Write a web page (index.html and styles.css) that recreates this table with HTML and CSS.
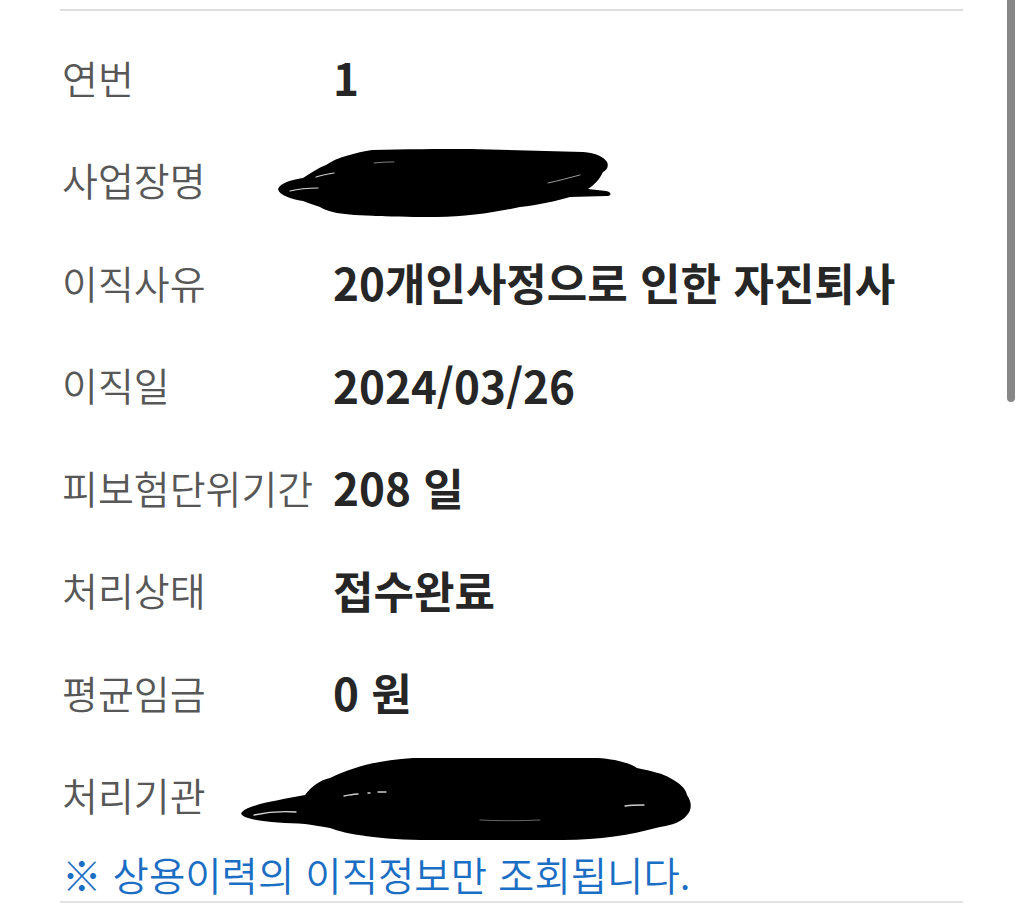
FILE: index.html
```html
<!DOCTYPE html>
<html lang="ko">
<head>
<meta charset="utf-8">
<title>이직정보</title>
<link rel="stylesheet" href="styles.css">
</head>
<body>
<div class="page">
  <div class="list">
    <div class="row"><div class="label">연번</div><div class="value">1</div></div>
    <div class="row"><div class="label">사업장명</div><div class="value">
      <svg class="redact redact-a" width="340" height="74" viewBox="0 0 340 74" aria-hidden="true">
        <path fill="#000" d="M 2,42 C 4,36 15,33 27,31 C 35,26 42,21 50,18 C 56,14 62,11 70,9 C 80,6 88,4 96,3 C 130,2 160,2 194,2 L 307,5 C 320,6 328,10 331,15 C 333,19 331,23 327,25 C 324,32 318,38 312,42 L 330,44 C 336,45 336,49 330,49 L 294,50 C 280,54 262,58 244,60 C 220,65 190,70 161,70 C 120,70 80,69 61,66 C 52,64 47,62 44,60 C 38,58 32,56 27,54 C 15,52 3,48 2,42 Z"/>
        <path fill="none" stroke="#fff" stroke-width="1.2" stroke-linecap="round" opacity="0.85" d="M 14,44 C 22,42 32,41 42,41"/>
        <path fill="none" stroke="#fff" stroke-width="1.2" stroke-linecap="round" opacity="0.8" d="M 40,30 C 46,28 52,27 58,26"/>
        <path fill="none" stroke="#fff" stroke-width="1" stroke-linecap="round" opacity="0.6" d="M 272,36 C 282,34 292,31 304,28"/>
        <path fill="none" stroke="#fff" stroke-width="1" stroke-linecap="round" opacity="0.5" d="M 98,16 C 106,15 112,15 118,15"/>
      </svg>
    </div></div>
    <div class="row"><div class="label">이직사유</div><div class="value">20개인사정으로 인한 자진퇴사</div></div>
    <div class="row"><div class="label">이직일</div><div class="value">2024/03/26</div></div>
    <div class="row"><div class="label">피보험단위기간</div><div class="value">208 일</div></div>
    <div class="row"><div class="label">처리상태</div><div class="value">접수완료</div></div>
    <div class="row"><div class="label">평균임금</div><div class="value">0 원</div></div>
    <div class="row"><div class="label">처리기관</div><div class="value">
      <svg class="redact redact-b" width="455" height="92" viewBox="0 0 455 92" aria-hidden="true">
        <path fill="#000" d="M 2,60 C 10,52 40,48 65,43 C 72,34 80,28 90,26 C 115,14 140,8 173,6 L 357,6 C 375,7 390,11 397,16 C 412,19 424,22 430,26 C 440,31 446,37 447,43 C 452,50 452,58 447,63 C 442,70 432,73 420,75 C 390,83 360,88 323,88 L 190,88 C 140,88 105,82 90,76 C 80,74 72,73 65,72 C 45,71 20,70 8,66 C 2,64 0,62 2,60 Z"/>
        <path fill="none" stroke="#fff" stroke-width="1.3" stroke-linecap="round" opacity="0.85" d="M 14,63 C 28,60 42,59 56,60"/>
        <path fill="none" stroke="#fff" stroke-width="1.3" stroke-linecap="round" opacity="0.8" d="M 104,44 C 110,43 114,42 118,42"/>
        <path fill="none" stroke="#fff" stroke-width="1.5" stroke-linecap="round" opacity="0.8" d="M 128,41 L 130,41"/>
        <path fill="none" stroke="#fff" stroke-width="1.3" stroke-linecap="round" opacity="0.8" d="M 138,40 C 142,40 144,40 146,40"/>
        <path fill="none" stroke="#fff" stroke-width="1.3" stroke-linecap="round" opacity="0.8" d="M 385,54 C 392,53 398,53 404,53"/>
        <path fill="none" stroke="#fff" stroke-width="1" stroke-linecap="round" opacity="0.4" d="M 240,68 C 260,69 280,69 300,68"/>
      </svg>
    </div></div>
  </div>
  <p class="note">※ 상용이력의 이직정보만 조회됩니다.</p>
</div>
<div class="scrollbar"></div>
</body>
</html>
```

FILE: styles.css
```css
html, body {
  margin: 0;
  padding: 0;
  background: #ffffff;
}

body {
  font-family: "Noto Sans CJK KR", "Noto Sans", sans-serif;
  width: 1024px;
  height: 904px;
  overflow: hidden;
}

.page {
  margin: 9px 61px 0 60px;
  border-top: 2px solid #dedede;
  border-bottom: 2px solid #e2e2e2;
}

.list {
  padding-top: 15px;
}

.row {
  display: grid;
  grid-template-columns: 273px 1fr;
  align-items: center;
  height: 102.5px;
}

.label {
  padding-left: 2px;
  font-size: 39px;
  font-weight: 350;
  color: #575757;
  white-space: nowrap;
  line-height: 1;
}

.value {
  position: relative;
  font-size: 44px;
  font-weight: 700;
  color: #262626;
  white-space: nowrap;
  line-height: 1;
  height: 44px;
  display: flex;
  align-items: center;
}

.redact {
  position: absolute;
  display: block;
}

.redact-a {
  left: -57px;
  top: -11px;
}

.redact-b {
  left: -93px;
  top: -21px;
}

.note {
  margin: 0;
  padding: 7px 0 6px 2px;
  font-size: 39.5px;
  font-weight: 350;
  color: #1a6ec4;
  line-height: 42px;
  white-space: nowrap;
}

.scrollbar {
  position: absolute;
  top: 0;
  left: 1007px;
  width: 8px;
  height: 402px;
  background: #878787;
  border-radius: 0 0 4px 4px;
}
```
